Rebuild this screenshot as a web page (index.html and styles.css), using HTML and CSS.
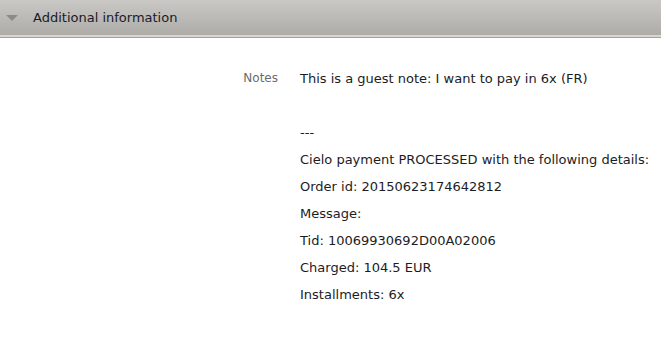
FILE: index.html
```html
<!DOCTYPE html>
<html>
  <head>
    <title>Additional information</title>
    <link rel="stylesheet" href="styles.css">
  </head>
  <body>
    <div class="section">
      <div class="section-header">
        <span class="toggle"></span>
        <span class="section-title">Additional information</span>
      </div>
      <div class="section-body">
        <div class="field">
          <div class="field-label">Notes</div>
          <div class="field-value">
            <div class="line">This is a guest note: I want to pay in 6x (FR)</div>
            <div class="line"></div>
            <div class="line">---</div>
            <div class="line">Cielo payment PROCESSED with the following details:</div>
            <div class="line">Order id: 20150623174642812</div>
            <div class="line">Message:</div>
            <div class="line">Tid: 10069930692D00A02006</div>
            <div class="line">Charged: 104.5 EUR</div>
            <div class="line">Installments: 6x</div>
          </div>
        </div>
      </div>
    </div>
  </body>
</html>
```

FILE: styles.css
```css
body {
  margin: 0;
  background: #fff;
  font-family: "DejaVu Sans", sans-serif;
  font-size: 13px;
  color: #1c1c24;
}
.section-header {
  height: 35px;
  display: flex;
  align-items: center;
  background: linear-gradient(#c9c8c5, #aeaca7);
  border-bottom: 2px solid #d8d6d2;
  box-shadow: 0 1px 0 #a19f9a;
}
.toggle {
  width: 0;
  height: 0;
  margin-left: 6px;
  margin-right: 15px;
  border-left: 6px solid transparent;
  border-right: 6px solid transparent;
  border-top: 6px solid #8c8b88;
}
.section-title {
  font-size: 13px;
  color: #1a1a28;
}
.section-body {
  padding-top: 28px;
}
.field {
  display: flex;
}
.field-label {
  width: 278px;
  text-align: right;
  font-size: 12px;
  color: #6b6b6b;
  line-height: 27px;
}
.field-value {
  padding-left: 22px;
}
.line {
  height: 27px;
  line-height: 27px;
}
```
